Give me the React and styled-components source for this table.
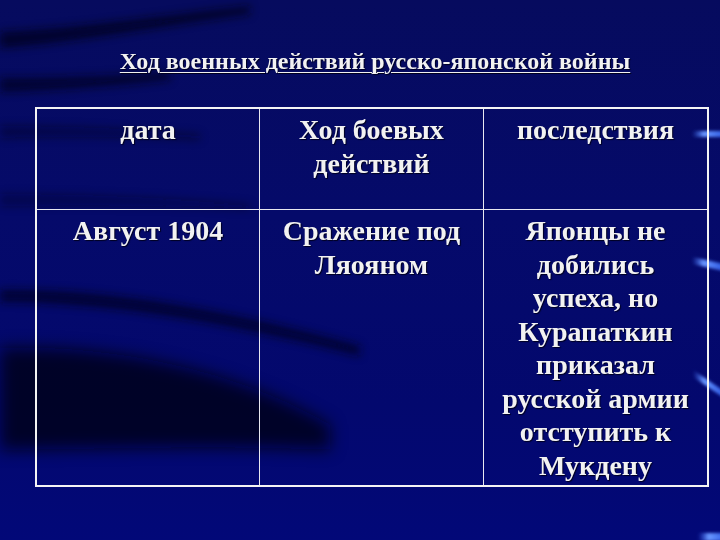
import React from "react";
import styled, { createGlobalStyle } from "styled-components";

const GlobalStyle = createGlobalStyle`
  html, body {
    margin: 0;
    padding: 0;
    background: #040a6c;
  }
`;

const Slide = styled.div`
  position: relative;
  width: 720px;
  height: 540px;
  overflow: hidden;
  background: linear-gradient(180deg, #060b5e 0%, #050a6a 40%, #03086e 75%, #020878 100%);
  font-family: "Liberation Serif", "Times New Roman", serif;
  color: #f2f2f2;
`;

const Backdrop = styled.svg`
  position: absolute;
  inset: 0;
  z-index: 0;
`;

const Content = styled.div`
  position: relative;
  z-index: 1;
  display: flex;
  flex-direction: column;
  align-items: center;
  padding: 47px 12px 0 36px;
  gap: 32px;
`;

const Title = styled.h1`
  margin: 0;
  font-size: 24px;
  font-weight: 700;
  text-decoration: underline;
  text-underline-offset: 3px;
  text-decoration-thickness: 1px;
  line-height: 28px;
  text-shadow: 1px 1px 1px #000020;
  padding-left: 6px;
`;

const Table = styled.div`
  display: grid;
  grid-template-columns: 223px 224px 223px;
  grid-template-rows: 101px 275px;
  border: 2px solid #f4f4f4;
  width: 670px;
`;

const Cell = styled.div`
  border-right: ${(p) => (p.$last ? "none" : "1px solid #e8e8f0")};
  border-bottom: ${(p) => (p.$head ? "1px solid #e8e8f0" : "none")};
  padding: 4px 6px 0;
  text-align: center;
  font-size: 28px;
  font-weight: 700;
  line-height: 33.5px;
  text-shadow: 1px 1px 1px #000020;
`;

export default function App() {
  return (
    <>
      <GlobalStyle />
      <Slide>
        <Backdrop width="720" height="540" viewBox="0 0 720 540">
          <defs>
            <filter id="blur8" x="-30%" y="-80%" width="160%" height="260%">
              <feGaussianBlur stdDeviation="8" />
            </filter>
            <filter id="blur4" x="-20%" y="-80%" width="140%" height="260%">
              <feGaussianBlur stdDeviation="4" />
            </filter>
            <filter id="glow" x="-40%" y="-80%" width="180%" height="260%">
              <feGaussianBlur stdDeviation="1.6" />
            </filter>
            <linearGradient id="bar" x1="0" x2="1" y1="0" y2="0">
              <stop offset="0" stopColor="#3a6cff" stopOpacity="0" />
              <stop offset="0.35" stopColor="#6a98ff" stopOpacity="1" />
              <stop offset="1" stopColor="#3060f0" stopOpacity="0.9" />
            </linearGradient>
          </defs>
          <g filter="url(#blur4)" fill="#00001a">
            <path d="M0 32 C 80 28, 160 16, 250 6 L 250 14 C 160 26, 80 42, 0 48 Z" opacity="0.75" />
            <path d="M0 78 C 60 78, 110 76, 170 72 L 170 80 C 110 86, 60 90, 0 92 Z" opacity="0.7" />
            <path d="M0 126 C 60 126, 120 128, 200 134 L 200 140 C 120 136, 60 136, 0 138 Z" opacity="0.4" />
            <path d="M0 194 C 80 194, 160 197, 250 204 L 250 210 C 160 205, 80 205, 0 206 Z" opacity="0.35" />
            <path d="M0 290 C 100 288, 220 308, 360 346 L 360 356 C 220 320, 100 302, 0 302 Z" opacity="0.7" />
          </g>
          <g filter="url(#blur8)" fill="#000016">
            <path d="M0 348 C 120 345, 240 372, 330 425 L 330 450 C 240 445, 120 448, 0 450 Z" opacity="0.75" />
          </g>
          <g filter="url(#glow)" fill="url(#bar)">
            <rect x="692" y="131" width="34" height="6" />
            <path d="M692 257 L 724 264 L 724 271 L 692 264 Z" />
            <path d="M693 370 L 724 391 L 724 398 L 693 377 Z" />
            <rect x="698" y="533" width="30" height="8" />
          </g>
        </Backdrop>
        <Content>
          <Title>Ход военных действий русско-японской войны</Title>
          <Table>
            <Cell $head>дата</Cell>
            <Cell $head>Ход боевых действий</Cell>
            <Cell $head $last>последствия</Cell>
            <Cell>Август 1904</Cell>
            <Cell>Сражение под Ляояном</Cell>
            <Cell $last>
              Японцы не добились успеха, но Курапаткин приказал русской армии
              отступить к Мукдену
            </Cell>
          </Table>
        </Content>
      </Slide>
    </>
  );
}
